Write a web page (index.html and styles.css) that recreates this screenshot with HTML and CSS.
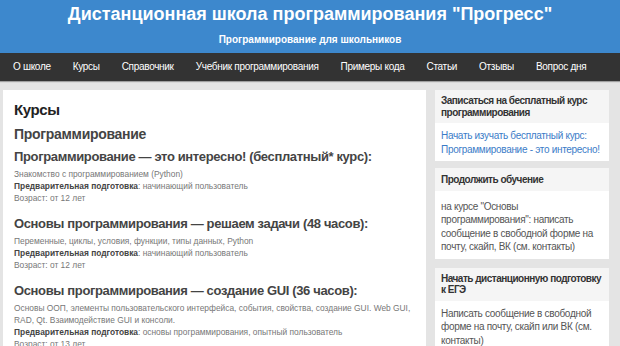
FILE: index.html
```html
<!DOCTYPE html>
<html lang="ru">
<head>
<meta charset="utf-8">
<link rel="stylesheet" href="styles.css">
</head>
<body>
<header class="site-header">
  <div class="site-title">Дистанционная школа программирования "Прогресс"</div>
  <div class="site-sub">Программирование для школьников</div>
</header>
<nav class="nav">
  <a>О школе</a>
  <a>Курсы</a>
  <a>Справочник</a>
  <a>Учебник программирования</a>
  <a>Примеры кода</a>
  <a>Статьи</a>
  <a>Отзывы</a>
  <a>Вопрос дня</a>
</nav>
<div class="wrap">
  <main class="main">
    <h1 class="h1">Курсы</h1>
    <h2 class="h2">Программирование</h2>
    <h3 class="h3">Программирование — это интересно! (бесплатный* курс):</h3>
    <div class="info">
      <div>Знакомство с программированием (Python)</div>
      <div><b>Предварительная подготовка</b>: начинающий пользователь</div>
      <div>Возраст: от 12 лет</div>
    </div>
    <h3 class="h3">Основы программирования — решаем задачи (48 часов):</h3>
    <div class="info">
      <div>Переменные, циклы, условия, функции, типы данных, Python</div>
      <div><b>Предварительная подготовка</b>: начинающий пользователь</div>
      <div>Возраст: от 12 лет</div>
    </div>
    <h3 class="h3">Основы программирования — создание GUI (36 часов):</h3>
    <div class="info">
      <div>Основы ООП, элементы пользовательского интерфейса, события, свойства, создание GUI. Web GUI, RAD, Qt. Взаимодействие GUI и консоли.</div>
      <div><b>Предварительная подготовка</b>: основы программирования, опытный пользователь</div>
      <div>Возраст: от 13 лет</div>
    </div>
  </main>
  <aside class="side">
    <section class="box box-1">
      <div class="box-head">Записаться на бесплатный курс программирования</div>
      <div class="box-body"><a class="link">Начать изучать бесплатный курс: Программирование - это интересно!</a></div>
    </section>
    <section class="box box-2">
      <div class="box-head">Продолжить обучение</div>
      <div class="box-body box-body-2">на курсе "Основы программирования": написать сообщение в свободной форме на почту, скайп, ВК (см. контакты)</div>
    </section>
    <section class="box box-3">
      <div class="box-head">Начать дистанционную подготовку к ЕГЭ</div>
      <div class="box-body">Написать сообщение в свободной форме на почту, скайп или ВК (см. контакты)</div>
    </section>
  </aside>
</div>
</body>
</html>
```
FILE: styles.css
```css
* { box-sizing: border-box; }
html, body { margin: 0; padding: 0; }
body {
  background: #e4e4e4;
  font-family: "Liberation Sans", Arial, sans-serif;
  color: #333;
  overflow: hidden;
  height: 346px;
}
.site-header {
  background: #3d88cd;
  height: 53px;
  color: #fff;
  text-align: center;
  padding-top: 2px;
}
.site-title {
  font-size: 18px;
  font-weight: bold;
  line-height: 24px;
}
.site-sub {
  font-size: 10px;
  font-weight: bold;
  line-height: 13px;
  margin-top: 7px;
}
.nav {
  background: #333;
  height: 28px;
  display: flex;
  align-items: center;
  padding-left: 2px;
  box-shadow: 0 1px 1px rgba(0,0,0,0.3);
}
.nav a {
  color: #fff;
  font-size: 10px;
  padding: 0 11px;
  line-height: 28px;
  letter-spacing: -0.3px;
  white-space: nowrap;
}
.wrap {
  display: flex;
  align-items: flex-start;
  padding: 9px 11px 0 3px;
  gap: 9px;
}
.main {
  background: #fff;
  width: 423px;
  flex: none;
  padding: 9px 11px 20px;
  min-height: 300px;
}
.h1 {
  font-size: 15px;
  font-weight: bold;
  color: #222;
  margin: 0 0 3px;
  line-height: 22px;
  letter-spacing: -0.4px;
}
.h2 {
  font-size: 14px;
  font-weight: bold;
  color: #444;
  margin: 0 0 3px;
  line-height: 20px;
  letter-spacing: -0.3px;
}
.h3 {
  font-size: 13px;
  font-weight: bold;
  color: #444;
  margin: 0 0 1px;
  line-height: 20px;
  letter-spacing: -0.36px;
}
.info {
  font-family: "Liberation Sans", Arial, sans-serif;
  font-size: 8.4px;
  line-height: 12px;
  color: #777;
  margin-bottom: 10px;
}
.info b { color: #444; }
.side {
  flex: 1;
  display: flex;
  flex-direction: column;
}
.box {
  background: #fff;
}
.box-2 { margin-top: 7px; }
.box-3 { margin-top: 9px; }
.box-head {
  background: #f5f5f5;
  font-size: 10px;
  font-weight: bold;
  color: #333;
  line-height: 11.5px;
  padding: 5px 6px;
  letter-spacing: -0.5px;
}
.box-2 .box-head { padding-top: 6px; padding-bottom: 5px; }
.box-body {
  font-size: 10px;
  line-height: 13.5px;
  color: #555;
  padding: 6px 6px 5px;
  letter-spacing: -0.3px;
}
.box-body-2 { padding-top: 9px; }
.link { color: #3b7cc8; }
```
